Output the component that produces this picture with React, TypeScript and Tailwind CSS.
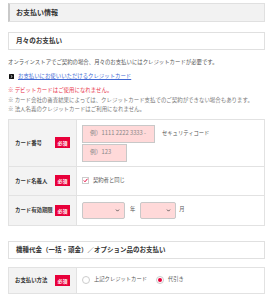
import { ChevronDown } from 'lucide-react';

const font = { fontFamily: '"Noto Sans CJK JP", "Noto Sans", sans-serif' };

function Badge() {
  return (
    <span className="flex h-[11px] w-[15px] items-center justify-center bg-[#e8003a] text-[5px] font-bold text-white">
      必須
    </span>
  );
}

function Label({ text }: { text: string }) {
  return (
    <div className="flex w-[68px] shrink-0 items-center justify-between border-r border-[#e2e2e2] bg-[#f3f3f3] pl-[6px] pr-[6px]">
      <span className="text-[5.4px] font-bold text-[#333]">{text}</span>
      <Badge />
    </div>
  );
}

function Select({ width }: { width: string }) {
  return (
    <div
      className={`flex h-[17px] ${width} items-center justify-end rounded-[2px] border border-[#c8c8c8] bg-[#ffd9d9] pr-[4px]`}
    >
      <ChevronDown className="h-[5px] w-[5px] text-[#444]" strokeWidth={4} />
    </div>
  );
}

export default function App() {
  return (
    <div className="h-[300px] w-[276px] bg-white pl-[8px] pr-[11px] pt-[3px] text-[#444]" style={font}>
      <div className="flex h-[19px] items-center border border-l-2 border-[#e0e0e0] border-l-[#c9c9c9] bg-[#f2f2f2] pl-[6px] text-[7px] font-bold text-[#333]">
        お支払い情報
      </div>

      <div className="mt-[10px] flex h-[18px] items-center border border-[#e0e0e0] bg-white pl-[7px] text-[6.6px] font-bold text-[#333]">
        月々のお支払い
      </div>

      <p className="mt-[7px] whitespace-nowrap text-[5.4px] leading-[10px] text-[#555]">
        オンラインストアでご契約の場合、月々のお支払いにはクレジットカードが必要です。
      </p>

      <div className="mt-[4px] flex h-[10px] items-center gap-[4px] pl-[1px]">
        <svg width="5" height="5" viewBox="0 0 10 10">
          <rect width="10" height="10" rx="1" fill="#111" />
          <path d="M3.5 2.5 L6.5 5 L3.5 7.5" stroke="#fff" strokeWidth="1.4" fill="none" />
        </svg>
        <a className="whitespace-nowrap text-[5.4px] text-[#4169d4] underline">
          お支払いにお使いいただけるクレジットカード
        </a>
      </div>

      <div className="mt-[5px] whitespace-nowrap text-[5.45px] leading-[9.6px]">
        <p className="text-[#e8334a]">※ デビットカードはご使用になれません。</p>
        <p className="text-[#777]">※ カード会社の審査結果によっては、クレジットカード支払でのご契約ができない場合もあります。</p>
        <p className="text-[#777]">※ 法人名義のクレジットカードはご利用になれません。</p>
      </div>

      <div className="mt-[4px] w-[257px] border border-[#e2e2e2] text-[5.3px]">
        <div className="flex h-[47px] border-b border-[#e2e2e2]">
          <Label text="カード番号" />
          <div className="flex flex-col gap-[1px] pl-[5px] pt-[5px]">
            <div className="flex items-center gap-[7px]">
              <div className="flex h-[18px] w-[73px] items-center overflow-hidden whitespace-nowrap border border-[#c8c8c8] bg-[#ffd9d9] pl-[7px] text-[5.8px] text-[#888]">
                例）1111 2222 3333 -
              </div>
              <span className="text-[#555]">セキュリティコード</span>
            </div>
            <div className="flex h-[18px] w-[45px] items-center border border-[#c8c8c8] bg-[#ffd9d9] pl-[7px] text-[5.8px] text-[#888]">
              例）123
            </div>
          </div>
        </div>

        <div className="flex h-[29px] border-b border-[#e2e2e2]">
          <Label text="カード名義人" />
          <div className="flex items-center gap-[4px] pl-[5px]">
            <span className="flex h-[7px] w-[7px] items-center justify-center border border-[#ccc] bg-white">
              <svg width="7" height="7" viewBox="0 0 10 10">
                <path d="M1.5 5 L4 7.5 L9 1.5" stroke="#e8003a" strokeWidth="2" fill="none" />
              </svg>
            </span>
            <span className="text-[#555]">契約者と同じ</span>
          </div>
        </div>

        <div className="flex h-[29px]">
          <Label text="カード有効期限" />
          <div className="flex items-center pl-[5px] text-[#555]">
            <Select width="w-[43px]" />
            <span className="ml-[5px]">年</span>
            <span className="ml-[5px]">
              <Select width="w-[36px]" />
            </span>
            <span className="ml-[3px]">月</span>
          </div>
        </div>
      </div>

      <div className="mt-[15px] flex h-[18px] items-center border border-[#e0e0e0] bg-white pl-[7px] text-[6.5px] font-bold text-[#333]">
        機種代金（一括・頭金）／オプション品のお支払い
      </div>

      <div className="mt-[8px] flex h-[27px] w-[257px] border border-[#e2e2e2] text-[5.3px]">
        <Label text="お支払い方法" />
        <div className="flex items-center pl-[5px] text-[#555]">
          <span className="h-[8px] w-[8px] rounded-full border border-[#ccc] bg-white" />
          <span className="ml-[4px]">上記クレジットカード</span>
          <span className="ml-[9px] flex h-[8px] w-[8px] items-center justify-center rounded-full border border-[#ccc] bg-white">
            <span className="h-[4px] w-[4px] rounded-full bg-[#e8003a]" />
          </span>
          <span className="ml-[4px]">代引き</span>
        </div>
      </div>
    </div>
  );
}
